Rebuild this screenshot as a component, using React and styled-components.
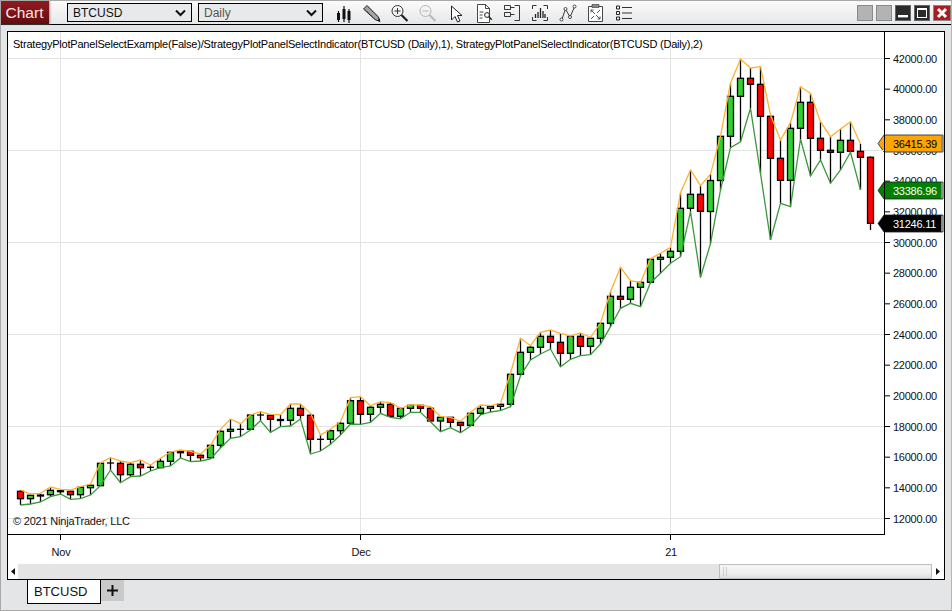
import React from "react";
import styled, { createGlobalStyle } from "styled-components";

const Global = createGlobalStyle`
  html, body { margin: 0; padding: 0; background: #e4e5e6; }
  * { box-sizing: border-box; }
`;

const FONT = `"Liberation Sans", Arial, sans-serif`;

const Win = styled.div`
  width: 952px; height: 611px; display: flex; flex-direction: column;
  background: #e4e5e6; border: 1px solid #a9a9a9; border-right-color: #b5b5b5;
  font-family: ${FONT}; overflow: hidden;
`;
const Toolbar = styled.div`
  height: 24px; flex: none; display: flex; align-items: flex-start;
  background: linear-gradient(180deg, #fbfbfb 0%, #e6e7e8 100%);
  border-bottom: 1px solid #000; margin-left: -1px; margin-right: -1px;
`;
const Brand = styled.div`
  width: 49px; height: 23px; display: flex; align-items: center; justify-content: center;
  background: linear-gradient(180deg, #8e1a1f 0%, #7d1317 55%, #5f0d10 100%);
  color: #f4e6e6; font-size: 15.5px; box-shadow: 1px 0 2px #999;
`;
const Select = styled.div`
  width: 125px; height: 19px; margin: 2px 0 0 ${p => p.$ml}px; padding: 0 5px;
  display: flex; align-items: center; justify-content: space-between;
  border: 1px solid #000; background: #e8e9ea; font-size: 12px;
  color: ${p => p.$muted ? "#555" : "#111"};
`;
const Icons = styled.div` display: flex; margin-left: 7px; `;
const IconBtn = styled.div`
  width: 28px; height: 23px; display: flex; align-items: center; justify-content: center;
`;
const WinBtns = styled.div`
  margin-left: auto; margin-right: 1px; margin-top: 4px; display: flex; gap: 3px;
`;
const WinBtn = styled.div`
  width: ${p => p.$w || 16}px; height: 16px; display: flex; align-items: center; justify-content: center;
  background: ${p => p.$bg}; border: 1px solid ${p => p.$bd};
`;
const Body = styled.div` flex: none; padding: 6px 6px 0; `;
const Frame = styled.div`
  height: 549px; display: flex; flex-direction: column; border: 1px solid #000; background: #fff;
`;
const PlotRow = styled.div` display: flex; height: 503px; flex: none; `;
const Plot = styled.div`
  position: relative; width: 877px; height: 503px; flex: none;
  border-right: 1px solid #000; border-bottom: 1px solid #000;
`;
const PlotTitle = styled.div`
  position: absolute; left: 5px; top: 5px; font-size: 11px; letter-spacing: -0.215px;
  line-height: 14px; color: #000; white-space: nowrap;
`;
const Copyright = styled.div`
  position: absolute; left: 5px; top: 482px; font-size: 11px; letter-spacing: -0.2px;
  line-height: 14px; color: #111; white-space: nowrap;
`;
const Svg = styled.svg` display: block; overflow: visible; `;
const AxisText = styled.text`
  font-family: ${FONT}; font-size: 11px; letter-spacing: -0.25px; fill: ${p => p.$fill || "#111"};
`;
const TimeAxis = styled.div` height: 29px; flex: none; `;
const Scroll = styled.div` height: 15px; flex: none; display: flex; background: #e4e4e4; `;
const ArrowBtn = styled.div`
  width: ${p => p.$w}px; background: #fff; display: flex; align-items: center; justify-content: center;
`;
const ScrollGap = styled.div` flex: 1; `;
const Thumb = styled.div`
  width: 213px; display: flex; align-items: center; padding-left: 3px; gap: 2px;
  background: linear-gradient(180deg, #f5f5f5 0%, #efefef 60%, #dedede 100%);
  border: 1px solid #bdbdbd;
`;
const Grip = styled.i` width: 1px; height: 9px; background: #cfcfcf; `;
const TabRow = styled.div` display: flex; padding-left: 20px; `;
const Tab = styled.div`
  width: 74px; height: 24px; display: flex; align-items: center; padding-left: 6px;
  background: #fff; border: 1px solid #000; border-top: 0; font-size: 13px; letter-spacing: 0; color: #111;
`;
const AddTab = styled.div`
  width: 23px; height: 21px; display: flex; align-items: center; justify-content: center;
  background: #c9c9c9; color: #111;
`;

// colour, body top, body bottom, high, low (pixel rows of the chart)
const C = [
["r",491.3,498.7,490,505],["g",495.3,498.7,494,504],["d",495,496,493.3,502],["g",490.3,494.7,487,496.7],
["d",490.7,491.7,489.3,494],["r",491.3,494.7,490,499.3],["g",487.3,494.7,486.7,498.7],["g",485.3,487.7,484.3,495],
["g",463.3,485.7,462.7,485.7],["x",463,463,457.7,470],["r",463.3,474.7,461,482.7],["g",464.3,474.7,462.7,476.7],
["r",464.3,467.7,460,476],["x",467.3,467.3,465,471],["g",461.3,467.7,458.3,467.7],["g",452.3,461.3,452,466],
["d",451.3,452.7,450,458],["r",451.3,455.3,451.3,461.7],["r",455.3,457.7,454,461],["g",445.3,457.7,445.3,459],
["g",431.3,445.3,429.3,448],["g",429.3,431.3,419,438.3],["x",429.3,429.3,423.7,436.7],["g",415,429.3,415,430],
["x",415,415,411.7,420.7],["r",415.3,419.3,414.3,432.3],["d",419.5,420.5,414.7,426.7],["g",408.3,420.3,404,426],
["r",408.3,415.3,404,419],["r",415.3,439.3,413.3,454],["x",439.3,439.3,435,451],["g",430.7,439.3,429.3,444.3],
["g",423.3,430.7,421.7,435],["g",400.7,423.3,397.7,424],["r",400.7,414.3,396.7,424.3],["g",407.3,414.3,405.7,422.3],
["g",404.3,407.3,401.7,413.3],["r",404.3,416.3,402.7,417.3],["g",408.3,416.3,408.3,418.7],["g",405.3,408.3,405,412.3],
["r",405.3,408.3,405,412.3],["r",408.3,421,406.7,421.7],["g",417.3,421,416.7,431.7],["r",417.3,422.3,417.3,427.7],
["r",422.3,425.3,421.3,432.7],["g",413.3,425.3,412.3,426],["g",408.3,413.3,405,415],["g",406.3,408.3,405.7,412],
["g",404.3,406.3,403.3,410.7],["g",374.3,404.3,373,406.7],["g",352.3,374.3,338.3,375.7],["g",347.3,352.3,345.7,360],
["g",336.3,347.3,332.3,354],["r",336.3,342.3,330,349],["r",342.3,353.3,333.3,366.7],["g",336.3,353.3,336,359.3],
["r",336.3,346.3,333,355.7],["g",338.3,346.3,337.3,354.7],["g",323.3,338.3,323.3,344],["g",296.3,323.3,291.7,326.7],
["r",296.3,299.3,267.3,308.3],["g",287.3,299.3,280.7,303.3],["g",282.3,287.3,282.7,306.7],["g",259.3,282.3,258.7,282.7],
["g",257.3,259.3,253.3,273.3],["g",251.3,257.3,247.3,263.3],["g",208.3,251.3,192.7,256.7],["g",194.3,208.3,170,211.7],
["r",194.3,211.3,185.7,277.3],["g",180.5,211.5,174.3,243.5],["g",136.3,180.5,136,190],["g",96.3,136.3,83.3,147.7],
["g",78.3,96.3,59,141.7],["r",78.3,84.3,68,108.3],["r",84.3,116.3,66.7,173.3],["r",116.3,158.3,115,240],
["r",158.3,180.3,140,203.3],["g",128.3,180.3,122.7,206.7],["g",102.3,128.3,86.7,139],["r",102.3,138.3,93.3,176],
["r",138.3,150.3,121.7,160],["r",150.3,152.3,136.7,183.3],["g",140.3,152.3,129,170],["r",140.3,151.3,121.7,152.3],
["r",151.3,157.3,144,190],["r",157.3,223.3,156.3,230],
];
const X0 = 20.5, DX = 10;
const GRID_Y = [58.5, 150.5, 242.5, 334.5, 426.5, 518.5];
const GRID_X = [60.5, 360.5, 670.5];
const FILL = { r: "#ff0000", g: "#32cd32", d: "#ff0000", x: "#000" };

const series = C.slice(0, 85);
const line = k => series.map((c, i) => `${X0 + i * DX},${c[k]}`).join(" ");

function Candle({ c, i }) {
  const x = X0 + i * DX;
  const [t, top, bot, hi, lo] = c;
  return (
    <g>
      <line x1={x} x2={x} y1={hi} y2={lo} stroke="#000" strokeWidth="1.3" />
      {t === "x"
        ? <line x1={x - 3.5} x2={x + 3.5} y1={top} y2={top} stroke="#000" strokeWidth="1.3" />
        : <rect x={x - 3} y={top} width="6" height={bot - top} fill={FILL[t]} stroke="#000" strokeWidth="1.3" />}
    </g>
  );
}

function Chart() {
  return (
    <Svg width="876" height="502" viewBox="8 32 876 502">
      {GRID_Y.map(y => <line key={y} x1="8" x2="884" y1={y} y2={y} stroke="#e3e3e3" strokeWidth="1" />)}
      {GRID_X.map(x => <line key={x} x1={x} x2={x} y1="32" y2="534" stroke="#e3e3e3" strokeWidth="1" />)}
      {C.map((c, i) => <Candle key={i} c={c} i={i} />)}
      <polyline points={line(3)} fill="none" stroke="#ffb02e" strokeWidth="1.3" />
      <polyline points={line(4)} fill="none" stroke="#3a9a3a" strokeWidth="1.3" />
    </Svg>
  );
}

const priceY = p => 58.5 + (42000 - p) * (460 / 30000);
const PRICES = Array.from({ length: 16 }, (_, i) => 12000 + i * 2000);
const MARKS = [
  { y: 143.5, bg: "#ffa500", fg: "#000", t: "36415.39" },
  { y: 190.5, bg: "#008000", fg: "#fff", t: "33386.96" },
  { y: 223.5, bg: "#000", fg: "#fff", t: "31246.11" },
];

function PriceAxis() {
  return (
    <Svg width="59" height="502" viewBox="885 32 59 502">
      {PRICES.map(p => {
        const y = priceY(p);
        return (
          <g key={p}>
            <line x1="885" x2="890" y1={y} y2={y} stroke="#000" />
            <AxisText x="893" y={y + 4}>{p.toFixed(2)}</AxisText>
          </g>
        );
      })}
      {MARKS.map(m => (
        <g key={m.t}>
          <polygon points={`878,${m.y} 884,${m.y - 8.5} 943,${m.y - 8.5} 943,${m.y + 8.5} 884,${m.y + 8.5}`} fill={m.bg} stroke="#222" strokeWidth="0.8" />
          <rect x="941" y={m.y - 8} width="2.5" height="16" fill="#8a8a8a" />
          <AxisText x="893" y={m.y + 4} $fill={m.fg}>{m.t}</AxisText>
        </g>
      ))}
    </Svg>
  );
}

function TimeLabels() {
  const L = [[60.5, "Nov", 61], [360.5, "Dec", 361], [670.5, "21", 671]];
  return (
    <Svg width="936" height="29" viewBox="8 535 936 29">
      {L.map(([x, t, tx]) => (
        <g key={t}>
          <line x1={x} x2={x} y1="535" y2="540" stroke="#000" />
          <AxisText x={tx} y="556" textAnchor="middle">{t}</AxisText>
        </g>
      ))}
    </Svg>
  );
}

const Ico = ({ children }) => <IconBtn><svg width="20" height="20" viewBox="0 0 20 20" fill="none">{children}</svg></IconBtn>;

const IconSet = () => (
  <Icons>
    <Ico>
      <path d="M4.5 8v11M10 3v16M15 6v14" stroke="#111" strokeWidth="1.2" />
      <rect x="3" y="10" width="3" height="7" fill="#111" /><rect x="8.5" y="6" width="3" height="10" fill="#111" /><rect x="13.5" y="8" width="3" height="9" fill="#111" />
    </Ico>
    <Ico>
      <path d="M1.5 6l3.5-3.5 11 11 2 5-5-2z" fill="#a5a5a5" stroke="#222" strokeWidth="1" />
      <path d="M3.5 6.5l10 10M6 4l10 10" stroke="#444" strokeWidth="0.8" strokeDasharray="1 1" />
      <path d="M15.5 18l2.5-.5-.5-2.5z" fill="#111" />
    </Ico>
    <Ico>
      <circle cx="7.5" cy="8" r="5.5" stroke="#333" strokeWidth="1" />
      <path d="M7.5 5v6M4.5 8h6" stroke="#333" strokeWidth="1" />
      <path d="M11.5 12l6 6" stroke="#222" strokeWidth="2.2" />
    </Ico>
    <Ico>
      <circle cx="7.5" cy="8" r="5.5" stroke="#b5b5b5" strokeWidth="1" />
      <path d="M4.5 8h6" stroke="#b5b5b5" strokeWidth="1" />
      <path d="M11.5 12l6 6" stroke="#bbb" strokeWidth="2.2" />
    </Ico>
    <Ico>
      <path d="M5.5 3v14l3.5-3.5 2.5 5.5 2.5-1-2.5-5.5H16z" fill="#fff" stroke="#222" strokeWidth="1" />
    </Ico>
    <Ico>
      <path d="M3.5 1.5h8l4 4v14h-12z" fill="#fff" stroke="#333" strokeWidth="0.9" />
      <path d="M11.5 1.5v4h4M5.5 9h4M5.5 12h3M5.5 15h3" stroke="#333" strokeWidth="0.9" />
      <circle cx="13" cy="12" r="2.4" stroke="#222" strokeWidth="1" fill="#fff" />
      <path d="M14.8 13.8l3 3" stroke="#222" strokeWidth="1.4" />
    </Ico>
    <Ico>
      <path d="M2.5 2.5h6v4h-6zM2.5 9.5h6v4h-6z" stroke="#222" strokeWidth="0.9" />
      <path d="M8.5 4.5h4M8.5 11.5h4" stroke="#222" strokeWidth="0.9" />
      <path d="M12.5 2.5h5v15h-5" stroke="#222" strokeWidth="0.9" />
    </Ico>
    <Ico>
      <path d="M2.5 6V2.5h4M13.5 2.5h4V6M2.5 14v3.5h4M13.5 17.5h4V14" stroke="#333" strokeWidth="1" />
      <path d="M5.5 11v4M8 9v6M10.5 5v10M13 8v7M15 11v4" stroke="#222" strokeWidth="1.3" />
    </Ico>
    <Ico>
      <path d="M4 16L7.5 6l4.5 8L16.5 4" stroke="#222" strokeWidth="0.9" />
      <circle cx="3.5" cy="16.5" r="1.5" fill="#fff" stroke="#222" strokeWidth="0.8" />
      <circle cx="7.5" cy="6" r="1.5" fill="#fff" stroke="#222" strokeWidth="0.8" />
      <circle cx="12" cy="14" r="1.5" fill="#fff" stroke="#222" strokeWidth="0.8" />
      <circle cx="16.5" cy="3.5" r="1.5" fill="#fff" stroke="#222" strokeWidth="0.8" />
    </Ico>
    <Ico>
      <path d="M2.5 3.5h14v15h-14z" fill="#fff" stroke="#333" strokeWidth="0.9" />
      <path d="M6 1.5h7v3H6z" fill="#888" stroke="#333" strokeWidth="0.6" />
      <path d="M5 7l4 4M5 7h2.5M5 7v2.5M14 7l-3 3M5 16l3-3M14 16l-4-4M14 16h-2.5M14 16v-2.5" stroke="#444" strokeWidth="0.9" />
    </Ico>
    <Ico>
      <path d="M2.5 3h3v3h-3zM2.5 8.5h3v3h-3zM2.5 14h3v3h-3z" stroke="#222" strokeWidth="1" />
      <path d="M8 4.5h10M8 10h10M8 15.5h10" stroke="#333" strokeWidth="1" />
    </Ico>
  </Icons>
);

const Chevron = () => (
  <svg width="11" height="8" viewBox="0 0 11 8" fill="none"><path d="M1 1.5l4.5 4.5L10 1.5" stroke="#111" strokeWidth="2" /></svg>
);

export default function App() {
  return (
    <Win>
      <Global />
      <Toolbar>
        <Brand>Chart</Brand>
        <Select $ml={18}>BTCUSD<Chevron /></Select>
        <Select $ml={6} $muted>Daily<Chevron /></Select>
        <IconSet />
        <WinBtns>
          <WinBtn $bg="#b3b3b3" $bd="#8a8a8a" />
          <WinBtn $bg="#b3b3b3" $bd="#8a8a8a" />
          <WinBtn $bg="#2a2a2a" $bd="#666">
            <svg width="12" height="12" viewBox="0 0 12 12"><rect x="1" y="8" width="10" height="2.4" fill="#fff" /></svg>
          </WinBtn>
          <WinBtn $bg="#2a2a2a" $bd="#666">
            <svg width="12" height="12" viewBox="0 0 12 12" fill="none"><rect x="1.5" y="1.5" width="9" height="9" stroke="#fff" /><rect x="1" y="1" width="10" height="2" fill="#fff" /></svg>
          </WinBtn>
          <WinBtn $w={18} $bg="#a81c22" $bd="#888">
            <svg width="12" height="12" viewBox="0 0 12 12"><path d="M2 2l8 8M10 2l-8 8" stroke="#fff" strokeWidth="3" /></svg>
          </WinBtn>
        </WinBtns>
      </Toolbar>
      <Body>
        <Frame>
          <PlotRow>
            <Plot>
              <Chart />
              <PlotTitle>StrategyPlotPanelSelectExample(False)/StrategyPlotPanelSelectIndicator(BTCUSD (Daily),1), StrategyPlotPanelSelectIndicator(BTCUSD (Daily),2)</PlotTitle>
              <Copyright>© 2021 NinjaTrader, LLC</Copyright>
            </Plot>
            <PriceAxis />
          </PlotRow>
          <TimeAxis><TimeLabels /></TimeAxis>
          <Scroll>
            <ArrowBtn $w={10}><svg width="4" height="7" viewBox="0 0 4 7"><path d="M4 0v7L0 3.5z" fill="#111" /></svg></ArrowBtn>
            <ScrollGap />
            <Thumb><Grip /><Grip /></Thumb>
            <ArrowBtn $w={12}><svg width="4" height="7" viewBox="0 0 4 7"><path d="M0 0v7l4-3.5z" fill="#111" /></svg></ArrowBtn>
          </Scroll>
        </Frame>
        <TabRow>
          <Tab>BTCUSD</Tab>
          <AddTab>
            <svg width="11" height="11" viewBox="0 0 11 11"><path d="M5.5 0v11M0 5.5h11" stroke="#111" strokeWidth="2" /></svg>
          </AddTab>
        </TabRow>
      </Body>
    </Win>
  );
}
